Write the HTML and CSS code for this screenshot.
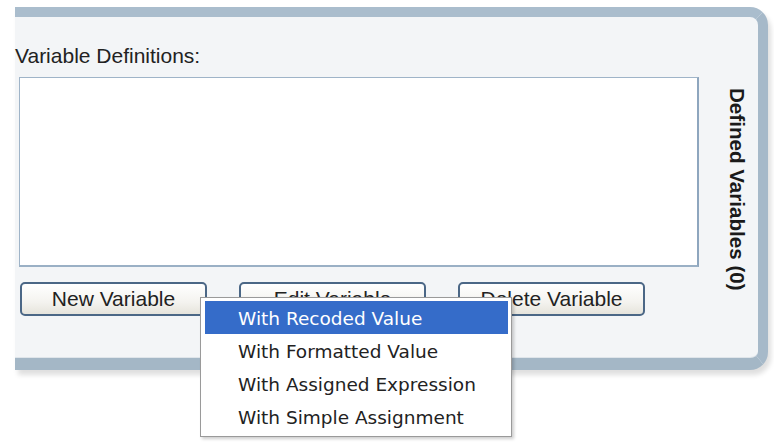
FILE: index.html
```html
<!DOCTYPE html>
<html>
<head>
<meta charset="utf-8">
<link rel="stylesheet" href="styles.css">
</head>
<body>
<div class="page">
  <div class="panel">
    <div class="main">
      <div class="label">Variable Definitions:</div>
      <div class="listbox"></div>
      <div class="buttons">
        <button class="btn">New Variable</button>
        <button class="btn">Edit Variable</button>
        <button class="btn">Delete Variable</button>
      </div>
    </div>
    <div class="side"><span class="vtext">Defined Variables (0)</span></div>
  </div>
  <div class="menu">
    <div class="item active">With Recoded Value</div>
    <div class="item">With Formatted Value</div>
    <div class="item">With Assigned Expression</div>
    <div class="item">With Simple Assignment</div>
  </div>
</div>
</body>
</html>
```
FILE: styles.css
```css
html, body {
  margin: 0;
  padding: 0;
  background: #ffffff;
}
.page {
  position: relative;
  width: 774px;
  height: 444px;
  padding: 7px 0 0 15px;
  box-sizing: border-box;
  font-family: "Liberation Sans", Arial, sans-serif;
  color: #222;
}
.panel {
  display: flex;
  width: 753px;
  height: 363px;
  box-sizing: border-box;
  background: #f3f5f7;
  border-top: 10px solid #aabdcd;
  border-right: 10px solid #a6b9c9;
  border-bottom: 12px solid #a4b7c6;
  border-top-right-radius: 18px;
  border-bottom-right-radius: 18px;
  box-shadow: inset 0 -1px 0 #dfe5ea, 3px 5px 5px rgba(0,0,0,0.13);
}
.main {
  width: 683px;
  flex: none;
}
.label {
  margin-top: 27px;
  font-size: 21px;
  line-height: 24px;
  padding-left: 0;
}
.listbox {
  margin: 9px 0 0 4px;
  width: 680px;
  height: 190px;
  box-sizing: border-box;
  background: #fff;
  border: 1px solid #9fb4c8;
  border-right: 2px solid #8ea6be;
  border-bottom: 2px solid #9ab0c5;
}
.buttons {
  display: flex;
  gap: 32px;
  margin: 15px 0 0 5px;
}
.btn {
  width: 187px;
  height: 34px;
  box-sizing: border-box;
  border: 2px solid #4b6786;
  border-radius: 5px;
  background: linear-gradient(#ffffff, #f4f3ef 60%, #e6e4dc);
  font-family: "Liberation Sans", Arial, sans-serif;
  font-size: 21px;
  color: #222;
  padding: 0;
}
.side {
  flex: 1;
  padding: 71px 0 0 28px;
}
.vtext {
  display: block;
  writing-mode: vertical-rl;
  font-weight: bold;
  font-size: 20.6px;
  line-height: 22px;
  color: #1a1a1a;
}
.menu {
  position: absolute;
  left: 200px;
  top: 297px;
  width: 312px;
  box-sizing: border-box;
  background: #fff;
  border: 1px solid #9a9a9a;
  padding: 3px 3px 3px 4px;
  box-shadow: 2px 2px 3px rgba(0,0,0,0.2);
  font-family: "DejaVu Sans", Verdana, sans-serif;
  font-size: 18.5px;
  color: #222;
}
.item {
  height: 33px;
  box-sizing: border-box;
  padding: 2px 0 0 33px;
  line-height: 31px;
  white-space: nowrap;
}
.item.active {
  background: #356cc9;
  color: #fff;
}
```
